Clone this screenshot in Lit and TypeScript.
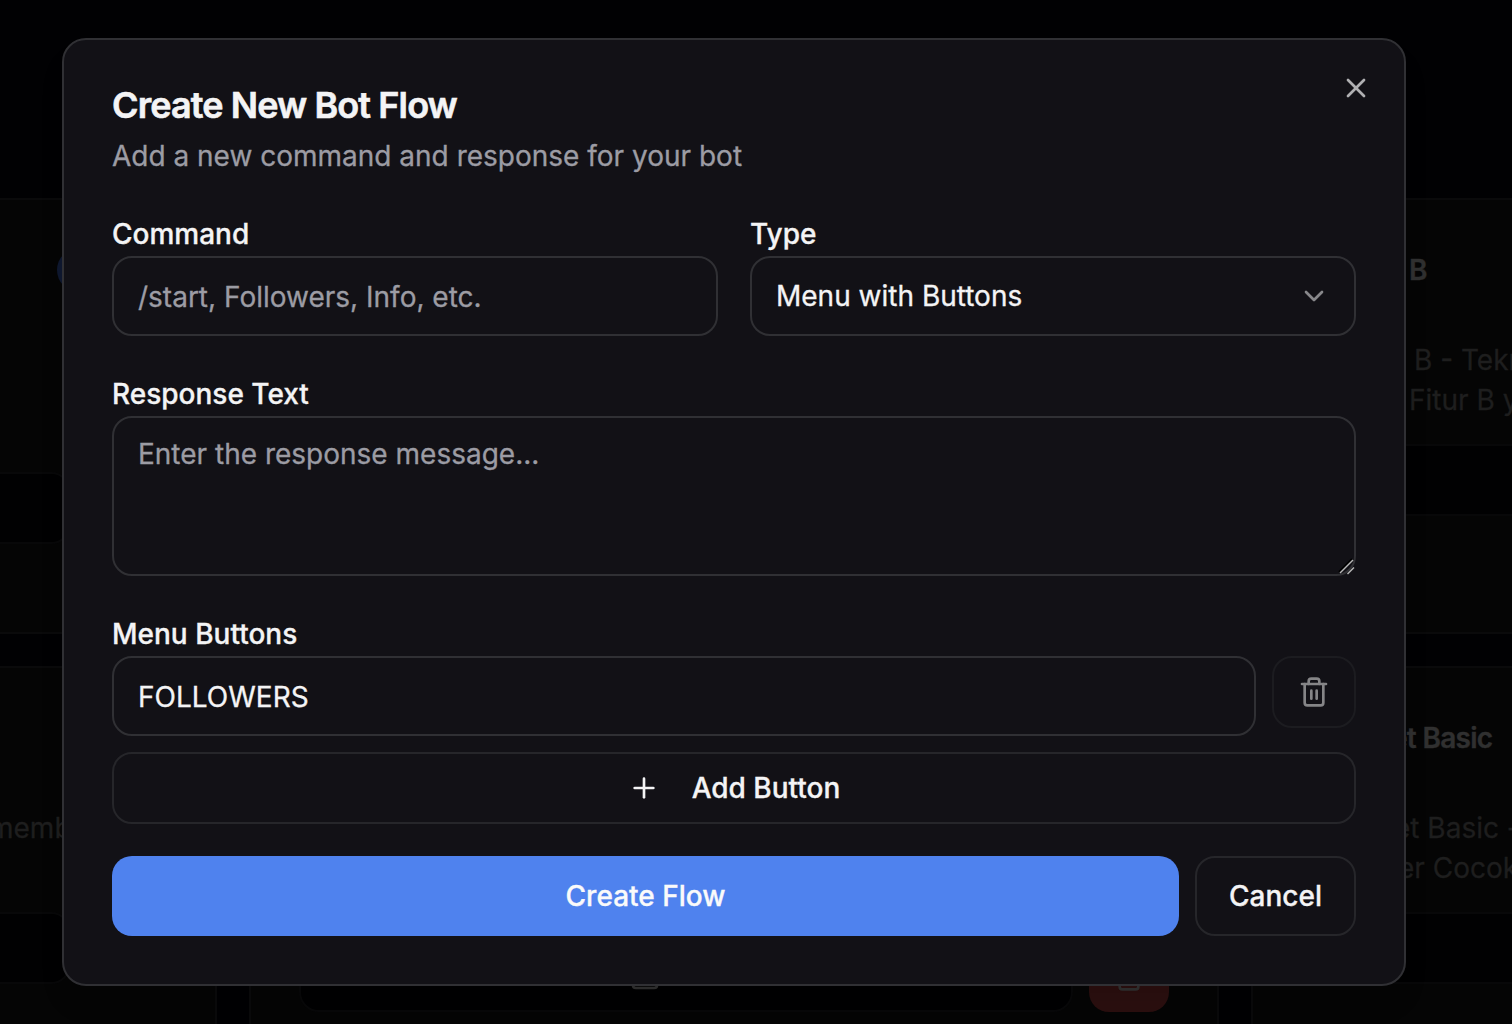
import { LitElement, html, css, svg, nothing } from "lit";
import { customElement, property } from "lit/decorators.js";
import { styleMap } from "lit/directives/style-map.js";

const ICONS = {
  x: svg`<path d="M18 6 6 18"/><path d="m6 6 12 12"/>`,
  chevron: svg`<path d="m6 9 6 6 6-6"/>`,
  plus: svg`<path d="M5 12h14"/><path d="M12 5v14"/>`,
  trash: svg`<path d="M3 6h18"/><path d="M19 6v14a2 2 0 0 1-2 2H7a2 2 0 0 1-2-2V6"/><path d="M8 6V4a2 2 0 0 1 2-2h4a2 2 0 0 1 2 2v2"/><path d="M10 11v6"/><path d="M14 11v6"/>`,
  edit: svg`<path d="M12 3H5a2 2 0 0 0-2 2v14a2 2 0 0 0 2 2h14a2 2 0 0 0 2-2v-7"/><path d="M18.4 2.6a1 1 0 0 1 3 3L12 15l-4 1 1-4Z"/>`,
};

const icon = (name: keyof typeof ICONS) => html`<svg class="icon" viewBox="0 0 24 24" aria-hidden="true">${ICONS[name]}</svg>`;

interface TextRun {
  text: string;
  indent: number;
}

const iconStyles = css`
  * { box-sizing: border-box; }
  .icon {
    width: 32px; height: 32px; flex: none; display: block;
    fill: none; stroke: currentColor; stroke-width: 2; stroke-linecap: round; stroke-linejoin: round;
  }
`;

@customElement("flow-card")
export class FlowCard extends LitElement {
  @property({ attribute: false }) heading?: TextRun;
  @property({ attribute: false }) lines: TextRun[] = [];
  @property({ type: Boolean }) badge = false;

  static styles = [iconStyles, css`
    :host {
      display: flex; flex-direction: column; box-sizing: border-box; width: 970px; height: 100%; padding: 48px;
      border: 2px solid #0a0a0b; border-radius: 24px; background: #050505; overflow: hidden;
    }
    .head { display: flex; align-items: center; height: 44px; }
    .heading { font-size: 28px; font-weight: 600; letter-spacing: -0.7px; color: #303030; white-space: pre; -webkit-text-stroke: 0.4px; }
    .badge { width: 90px; height: 44px; margin-left: auto; margin-right: 20px; border-radius: 22px; background: #0f1830; }
    .copy { margin-top: 48px; font-size: 28px; line-height: 40px; color: #1e1e1e; white-space: nowrap; -webkit-text-stroke: 0.3px; }
    .actions { display: flex; gap: 16px; margin-top: auto; }
    .edit {
      display: flex; align-items: center; justify-content: center; gap: 32px; flex: 1; height: 72px;
      border: 2px solid #080809; border-radius: 20px; background: #010102; color: #303030;
      font-size: 28px; font-weight: 500;
    }
    .delete {
      display: flex; align-items: center; justify-content: center; width: 80px; height: 72px;
      border-radius: 20px; background: #2b0f0f; color: #303030;
    }
  `];

  render() {
    return html`
      <div class="head">
        ${this.heading
          ? html`<span class="heading" style=${styleMap({ paddingLeft: `${this.heading.indent}px` })}>${this.heading.text}</span>`
          : nothing}
        ${this.badge ? html`<span class="badge"></span>` : nothing}
      </div>
      <div class="copy">
        ${this.lines.map((l) => html`<div style=${styleMap({ paddingLeft: `${l.indent}px` })}>${l.text}</div>`)}
      </div>
      <div class="actions">
        <div class="edit">${icon("edit")}<span>Edit</span></div>
        <div class="delete">${icon("trash")}</div>
      </div>
    `;
  }
}

@customElement("flow-board")
export class FlowBoard extends LitElement {
  static styles = css`
    * { box-sizing: border-box; }
    :host { display: block; width: 1512px; height: 1024px; overflow: hidden; background: #010103; }
    .columns { display: flex; gap: 32px; width: 2974px; margin-left: -753px; padding-top: 198px; }
    .column { display: flex; flex-direction: column; gap: 32px; }
    .slot { height: 436px; }
    .foot-88 { padding-bottom: 88px; }
    .foot-116 { padding-bottom: 116px; }
  `;

  render() {
    return html`
      <div class="columns">
        <div class="column">
          <div class="slot"><flow-card class="foot-88" badge></flow-card></div>
          <div class="slot"><flow-card class="foot-116" .lines=${[{ text: "memb", indent: 692 }]}></flow-card></div>
        </div>
        <div class="column">
          <div class="slot"><flow-card></flow-card></div>
          <div class="slot"><flow-card class="foot-88"></flow-card></div>
        </div>
        <div class="column">
          <div class="slot">
            <flow-card class="foot-116"
              .heading=${{ text: "B", indent: 108 }}
              .lines=${[{ text: "B - Tekn", indent: 113 }, { text: "Fitur B y", indent: 108 }]}
            ></flow-card>
          </div>
          <div class="slot">
            <flow-card class="foot-116"
              .heading=${{ text: "et Basic", indent: 90 }}
              .lines=${[{ text: "et Basic -", indent: 93 }, { text: "er Cocok", indent: 97 }]}
            ></flow-card>
          </div>
        </div>
      </div>
    `;
  }
}

@customElement("flow-dialog")
export class FlowDialog extends LitElement {
  static styles = [iconStyles, css`
    :host {
      display: flex; flex-direction: column; gap: 32px; width: 1344px; height: 948px; padding: 48px;
      border: 2px solid #303034; border-radius: 24px; background: #121116;
      box-shadow: 0 20px 30px -6px rgba(0, 0, 0, 0.1);
      -webkit-text-stroke: 0.3px;
    }
    .header { display: flex; flex-direction: column; gap: 12px; }
    .title {
      margin: -1px 0 1px; font-size: 36px; line-height: 36px; font-weight: 600; letter-spacing: -0.9px;
      -webkit-text-stroke: 0.6px;
    }
    .subtitle { margin: 0; font-size: 28px; line-height: 40px; color: #9c9ca4; }
    .pair { display: grid; grid-template-columns: 1fr 1fr; gap: 32px; }
    .field { display: flex; flex-direction: column; }
    .label { padding: 12px 0 8px; font-size: 28px; line-height: 28px; font-weight: 500; }
    .control {
      display: block; width: 100%; height: 80px; margin: 0; padding: 2px 24px 0; outline: none;
      border: 2px solid #303034; border-radius: 20px; background: transparent;
      font: inherit; font-size: 28px; color: #f4f4f5;
    }
    .control::placeholder { color: #9c9ca4; opacity: 1; }
    .select { display: flex; align-items: center; justify-content: space-between; padding-top: 0; text-align: left; }
    .select .icon { color: #88888b; }
    .area { height: 160px; padding: 16px 24px; line-height: 40px; resize: none; }
    .area-wrap { position: relative; }
    .grip { position: absolute; right: 0; bottom: 0; width: 20px; height: 20px; fill: none; }
    .buttons { display: flex; flex-direction: column; gap: 16px; }
    .row { display: flex; gap: 16px; }
    .btn {
      display: flex; align-items: center; justify-content: center; margin: 0; padding: 0;
      border: 2px solid #26262a; border-radius: 20px; background: transparent;
      font: inherit; font-size: 28px; font-weight: 500; color: #f4f4f5;
    }
    .remove { flex: none; width: 84px; height: 72px; border-color: #1c1c20; color: #858587; }
    .add { height: 72px; gap: 32px; }
    .create { flex: 1; height: 80px; border: 0; background: #4f82ee; color: #fafafa; }
    .cancel { flex: none; width: 161px; height: 80px; }
    .close { position: absolute; top: 32px; right: 32px; color: #b0b0b2; }
  `];

  render() {
    return html`
      <div class="header">
        <h2 class="title">Create New Bot Flow</h2>
        <p class="subtitle">Add a new command and response for your bot</p>
      </div>
      <div class="pair">
        <div class="field">
          <label class="label">Command</label>
          <input class="control" placeholder="/start, Followers, Info, etc." />
        </div>
        <div class="field">
          <label class="label">Type</label>
          <button class="control select"><span>Menu with Buttons</span>${icon("chevron")}</button>
        </div>
      </div>
      <div class="field">
        <label class="label">Response Text</label>
        <div class="area-wrap">
          <textarea class="control area" placeholder="Enter the response message..."></textarea>
          <svg class="grip" viewBox="0 0 20 20" aria-hidden="true">
            <path d="M3 16 16 3" stroke="#000" stroke-width="2"/>
            <path d="M4 17 17 4" stroke="#b8b8b8" stroke-width="1.5"/>
            <path d="M11.5 18 18 11.5" stroke="#b8b8b8" stroke-width="1.5"/>
          </svg>
        </div>
      </div>
      <div class="field">
        <label class="label">Menu Buttons</label>
        <div class="buttons">
          <div class="row">
            <input class="control" .value=${"FOLLOWERS"} />
            <button class="btn remove">${icon("trash")}</button>
          </div>
          <button class="btn add">${icon("plus")}<span>Add Button</span></button>
        </div>
      </div>
      <div class="row">
        <button class="btn create">Create Flow</button>
        <button class="btn cancel">Cancel</button>
      </div>
      <div class="close">${icon("x")}</div>
    `;
  }
}

@customElement("app-root")
export class AppRoot extends LitElement {
  static styles = css`
    :host {
      display: block; position: relative; width: 1512px; height: 1024px; overflow: hidden;
      font-family: Inter, "Liberation Sans", sans-serif; color: #f4f4f5; background: #010103;
    }
    .dialog { position: absolute; left: 62px; top: 38px; box-sizing: border-box; }
  `;

  render() {
    return html`<flow-board></flow-board><flow-dialog class="dialog"></flow-dialog>`;
  }
}
